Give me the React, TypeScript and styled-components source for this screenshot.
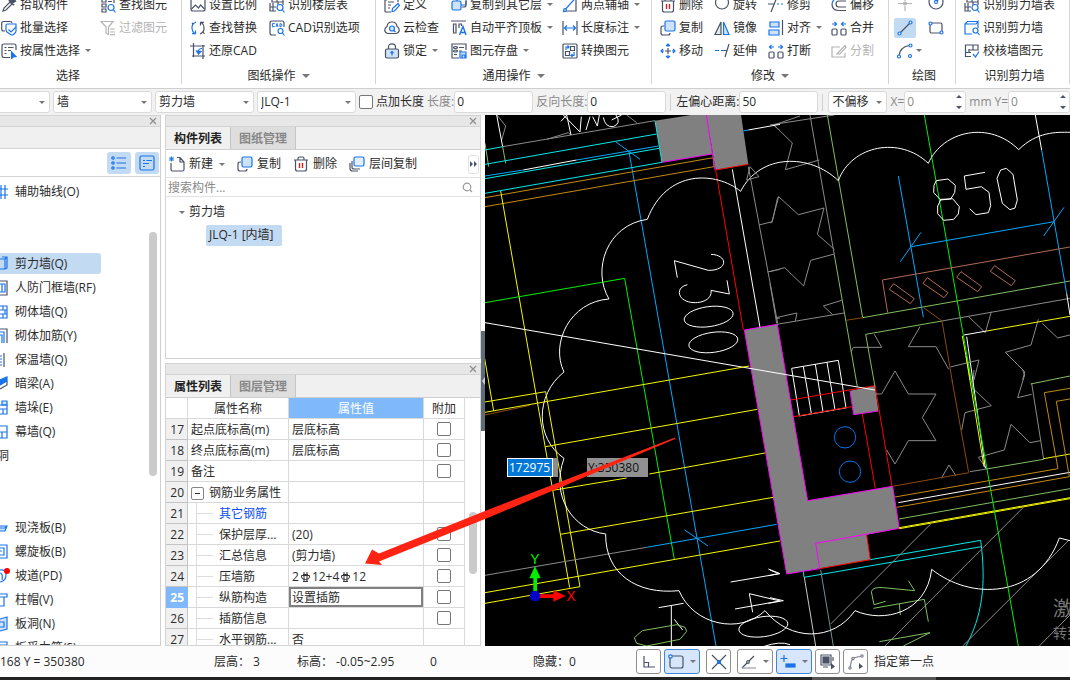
import React from "react";
import styled, { createGlobalStyle, css } from "styled-components";

const INK = "#4a5366";
const BLUE = "#1a73e8";
const PALE = "#cfe2fb";

const GlobalStyle = createGlobalStyle`
  *, *::before, *::after { box-sizing: border-box; }
  body { margin: 0; background: #fff; }
  body, button, input, select, table {
    font-family: "Open Sans", "Noto Sans CJK SC", sans-serif;
    font-size: 12px;
    line-height: 16px;
    color: #2b2b2b;
  }
  button, input, select { margin: 0; padding: 0; border: 0; background: none; }
`;

/* ---------- icons ---------- */

const Svg = styled.svg`
  display: block;
  flex: none;
  fill: none;
  stroke: ${INK};
  stroke-width: 1.2;
`;

const icons: Record<string, React.ReactNode> = {
  pick: (
    <>
      <path d="M2 14l1-3 6-6 2 2-6 6z" />
      <path d="M8 3l5 5M10 5l2-3 2 2-3 2z" fill={INK} strokeWidth="2" />
    </>
  ),
  batch: (
    <>
      <path d="M4 11H2.500Q.7 11 .7 9V3.500Q.7 1.500 2.700 1.500H9Q11 1.500 11 3" />
      <path d="M5 5.500Q5 4 6.500 4H15V11Q15 12 14 13L12.500 14.500Q11 15.500 9.500 14.500L6 12Q5 11 5 10z" stroke={BLUE} />
      <path d="M7.500 9.500l2.500 2.500 5-5" stroke={BLUE} />
    </>
  ),
  attrSelect: (
    <>
      <path d="M9 14.500H3Q1 14.500 1 12.500V3Q1 1 3 1H13Q15 1 15 3V7" />
      <path d="M3.500 4.500h2M7 4.500h5.500M3.500 7.500h2M7 7.500h3M3.500 10.500h2" />
      <path d="M10.500 9l4.500 4.500-2.500.3-2 1.700z" fill={BLUE} stroke={BLUE} />
    </>
  ),
  findElem: (
    <>
      <path d="M2 1h4v4H2zM2 7h4v3H2zM2 12h4v3H2zM8.500 1.500H14V6M8 4.500h4" />
      <circle cx="11" cy="10.500" r="3" stroke={BLUE} />
      <path d="M13.500 13l2 2.500" stroke={BLUE} />
    </>
  ),
  filter: (
    <g stroke="#b4b4b4">
      <path d="M1 1.500h12L8.500 7v7.500L6 13V7zM10 9h5M10 12h5M10 14.700h5" />
    </g>
  ),
  scale: (
    <>
      <path d="M3 1h10q2 0 2 2v9q0 2-2 2H3q-2 0-2-2V3q0-2 2-2z" />
      <path d="M1.500 12l4-4 3 3 2-3 4 4" />
    </>
  ),
  replace: (
    <>
      <path d="M6 2Q1.500 4 2 8.500 2.300 12 5 14M2 13.700h3.500V10.500" stroke={BLUE} />
      <path d="M10 14Q14.500 12 14 7.500 13.700 4 11 2M14 2.300h-3.500V5.500M3 3l-1 1M13 12l1.500 2" />
    </>
  ),
  restore: (
    <>
      <path d="M3.500 0v14M0 3h15M13 2v14M2 13h13" />
      <path d="M12 5.500Q8.500 5.500 8.500 8.500" stroke={BLUE} />
      <path d="M6.500 8l2 3 2.500-2.500z" fill={BLUE} stroke={BLUE} />
    </>
  ),
  floorTable: (
    <>
      <path d="M3 1h5v4H3zM8 1h6v4H8zM1 6v8h6M4 6v8M1 10h6M9 5v3M14 5v3" />
      <circle cx="11" cy="10.500" r="3" stroke={BLUE} />
      <path d="M13.500 13l2 2.500" stroke={BLUE} />
    </>
  ),
  cadOpts: (
    <>
      <path d="M7 15H3q-2 0-2-2V3q0-2 2-2h10q2 0 2 2v4" />
      <path d="M5.800 3.600H3.400v3.200h2.400M7 7l1-3.500L9 7M11 3.600v3.200q2 0 2-1.600t-2-1.600z" stroke={BLUE} strokeWidth="1" />
      <circle cx="11.500" cy="11" r="2.500" stroke={BLUE} />
      <path d="M13.500 13l2 2.500" stroke={BLUE} />
    </>
  ),
  define: (
    <>
      <path d="M7 15H2q-1 0-1-1V1h13v4M4 5h6M4 8h3M4 11h2M1 3h2" />
      <path d="M8 14.500l.5-3 5.500-5 1.500 2-5 5.500z" stroke={BLUE} />
    </>
  ),
  cloud: (
    <>
      <path d="M4 13.500Q.8 13 .8 10 .8 7.500 3 6.500 3.500 2 8 2t5 4.500q2.200 1 2.200 3.500 0 3-3.200 3.500z" />
      <circle cx="8" cy="8.500" r="2.500" stroke={BLUE} fill={PALE} />
      <path d="M10 10.500l1.500 1.500" stroke={BLUE} />
    </>
  ),
  lock: (
    <>
      <path d="M4.500 6V4Q4.500 .8 8 .8t3.500 3.200v2" />
      <rect x="1.500" y="6" width="13" height="9" rx="1.500" fill={PALE} />
      <path d="M8 12.500v-3M6.500 10L8 8.500 9.500 10" stroke={BLUE} />
    </>
  ),
  copyLayer: (
    <>
      <rect x="6" y="-1" width="9" height="9" rx="1.500" stroke={BLUE} />
      <rect x="1" y="4" width="9" height="9" rx="1.500" fill={PALE} stroke={BLUE} />
      <path d="M11 10h2q2 0 2-2V4" />
    </>
  ),
  alignTop: (
    <>
      <path d="M0 1h15M2.500 4h2.500v9H2.500zM8 8V4h2.500v2" />
      <path d="M8.500 15L12 6.500l3 8.500M9.500 12.500h4.500" stroke={BLUE} strokeWidth="1.400" />
    </>
  ),
  saveElem: (
    <>
      <path d="M8 15H1V1h14v6M8 4.500h5M8 8h3" />
      <ellipse cx="4.500" cy="4.500" rx="2" ry="1" />
      <ellipse cx="4.500" cy="8" rx="2" ry="1" />
      <path d="M9 9h6v6H9zM11 15v-3h3v3" stroke={BLUE} fill={PALE} />
      <path d="M3 11.500h3" />
    </>
  ),
  twoPoint: (
    <>
      <path d="M2 14h12V1" />
      <path d="M1 15L14.500 0" stroke={BLUE} />
      <circle cx="3" cy="13" r="1.300" stroke={BLUE} fill="#fff" />
    </>
  ),
  dimension: (
    <>
      <path d="M1 1v14M15 1v14" />
      <path d="M2.500 8h11M5 5.500L2.500 8 5 10.500M11 5.500L13.500 8 11 10.500" stroke={BLUE} />
    </>
  ),
  convert: (
    <>
      <rect x="1" y="1" width="14" height="14" rx="1" />
      <path d="M8.500 3.500h4v4h-4zM3.500 8.500h4v4h-4z" />
      <path d="M4 7V4h3M5.500 2.500L7 4 5.500 5.500M12 9v3.500H9M10.500 11L9 12.500 10.500 14" stroke={BLUE} />
    </>
  ),
  trash: (
    <>
      <path d="M2.500 4v9q0 2 2 2h7q2 0 2-2V4M1 4h14M5 4V2.500Q5 1 6.500 1h3Q11 1 11 2.500V4" />
      <path d="M6.500 7v5M9.500 7v5" stroke="#e02020" strokeWidth="1.400" />
    </>
  ),
  copy: (
    <>
      <path d="M4 6H3Q1 6 1 8v5q0 2 2 2h5q2 0 2-2" />
      <rect x="5" y="1" width="10" height="10" rx="1.500" fill={PALE} stroke={BLUE} />
    </>
  ),
  layerCopy: (
    <>
      <path d="M1 7v5.500Q1 15 3.500 15H9M3 5v6q0 2 2 2h6" />
      <rect x="5" y="1" width="10" height="9" rx="1.500" fill="#e3effd" stroke={BLUE} />
    </>
  ),
  move: (
    <>
      <path d="M8 5v6M5 8h6" />
      <path d="M8 4V1M6 3l2-2 2 2M8 12v3M6 13l2 2 2-2M4 8H1M3 6L1 8l2 2M12 8h3M13 6l2 2-2 2" stroke={BLUE} />
    </>
  ),
  rotate: <circle cx="8" cy="5.500" r="6.500" />,
  mirror: (
    <>
      <path d="M7 2v12.500H1z" fill="#e6e8eb" />
      <path d="M9.500 2v12.500H15z" fill={PALE} stroke={BLUE} />
    </>
  ),
  extend: (
    <>
      <path d="M1 7.500h9" stroke={BLUE} strokeDasharray="4 2" />
      <path d="M10 7.500h3M11 14L15 1" />
    </>
  ),
  trim: (
    <>
      <path d="M0 7h6M3 15L9 0" />
      <path d="M9 7h6" stroke={BLUE} strokeDasharray="2 2" />
    </>
  ),
  align: (
    <>
      <path d="M14.500 0v15" />
      <path d="M2 2h9v5H2zM1 10h10v5H1z" fill={PALE} stroke={BLUE} />
    </>
  ),
  breakIt: (
    <>
      <rect x="1" y="9" width="5" height="6" rx="1" />
      <rect x="10" y="9" width="5" height="6" rx="1" />
      <path d="M6 4H1.500M3.500 2l-2 2 2 2M10 4h4.500M12.500 2l2 2-2 2" stroke={BLUE} />
    </>
  ),
  merge: (
    <>
      <rect x="1" y="9" width="5" height="6" rx="1" />
      <rect x="10" y="9" width="5" height="6" rx="1" />
      <path d="M1 4h4.500M3.500 2l2 2-2 2M15 4h-4.500M12.500 2l-2 2 2 2" stroke={BLUE} />
    </>
  ),
  offset: (
    <>
      <path d="M15 1H8Q2 1 1 7" stroke={BLUE} />
      <path d="M15 13.500H7Q1 13 1 7M15 4H8Q5 4 5 7t3 3h7" />
    </>
  ),
  split: (
    <g stroke="#b4b4b4">
      <path d="M9 4H1v10h13v-4M6 11L14 2.500l1 2L9 11z" />
    </g>
  ),
  point: (
    <g stroke="#b4b4b4">
      <path d="M8-2v6M8 9v5M1 6.500h5M10 6.500h5" />
      <circle cx="8" cy="6.500" r="1.500" fill="#b4b4b4" />
    </g>
  ),
  line: (
    <>
      <path d="M3 13L13 3" />
      <circle cx="2.500" cy="13.500" r="1.500" stroke={BLUE} fill="#fff" />
      <circle cx="13.500" cy="2.500" r="1.500" stroke={BLUE} fill="#fff" />
    </>
  ),
  arc: (
    <>
      <path d="M2 13Q3 4 12 2.500" />
      <circle cx="2" cy="13.500" r="1.500" stroke={BLUE} fill="#fff" />
      <circle cx="13.500" cy="2.500" r="1.500" stroke={BLUE} fill="#fff" />
      <circle cx="13" cy="13" r="1.500" stroke={BLUE} fill="#fff" />
    </>
  ),
  circle: (
    <>
      <circle cx="8" cy="5" r="7" />
      <path d="M8 5l4-4" stroke={BLUE} />
      <circle cx="8" cy="5" r="1.500" stroke={BLUE} fill="#fff" />
    </>
  ),
  rect: (
    <>
      <rect x="2" y="3" width="12" height="10" rx="1.500" />
      <circle cx="2.500" cy="3.500" r="1.500" stroke={BLUE} fill="#fff" />
      <circle cx="13.500" cy="12.500" r="1.500" stroke={BLUE} fill="#fff" />
    </>
  ),
  findWall: (
    <>
      <path d="M8 14H1V4h11l2-2.500V8M1 4l2.500-2.500H14" stroke={BLUE} />
      <circle cx="11.500" cy="10.500" r="2.500" stroke={BLUE} />
      <path d="M13.500 12.500l2 2.500" stroke={BLUE} />
    </>
  ),
  checkWall: (
    <>
      <path d="M7 13.500H1.500V2H14v5H5M1.500 9.500H7M9 2v5M5 6v4" />
      <path d="M9 11l2.500 3L15 8.500" stroke={BLUE} />
    </>
  ),
  create: (
    <>
      <path d="M2 7v6.500q0 1.500 1.500 1.500h10q1.500 0 1.500-1.500V6l-4-4.500H8M11 1.500V6h4" />
      <path d="M.5 1l4 4M4.500 1l-4 4M2.500 .5v5M0 3h5" stroke={BLUE} strokeWidth="1" />
    </>
  ),
  list: (
    <g stroke={BLUE}>
      <circle cx="2" cy="3" r="1.200" />
      <circle cx="2" cy="8" r="1.200" />
      <circle cx="2" cy="13" r="1.200" />
      <path d="M5.500 3H15M5.500 8H15M5.500 13H15" />
    </g>
  ),
  detail: (
    <g stroke={BLUE}>
      <rect x="1" y="1" width="14" height="14" rx="1.500" />
      <path d="M4 5.500h2M7.500 5.500H13M4 8.500h6M4 11.500h2" />
    </g>
  ),
  ortho: <path d="M3 2v11h11M3 8.500h4.500V13" />,
  snapBox: (
    <>
      <rect x="2" y="2" width="13" height="12" rx="2" />
      <circle cx="2.500" cy="2.500" r="1.700" stroke={BLUE} fill="#fff" />
    </>
  ),
  cross: (
    <>
      <path d="M1 1l14 14M15 1L1 15" />
      <circle cx="8" cy="8" r="1.500" fill={BLUE} stroke={BLUE} />
    </>
  ),
  angle: (
    <>
      <path d="M1 14L13 2" />
      <path d="M1 14h14" stroke="#9aa0ab" />
      <circle cx="7" cy="8" r="1.300" fill="#fff" />
    </>
  ),
  addInput: (
    <>
      <path d="M4 1v7M.5 4.500h7" stroke={BLUE} />
      <rect x="6" y="10" width="9" height="3" fill={BLUE} stroke={BLUE} />
    </>
  ),
  copyRun: (
    <>
      <rect x="3" y="3" width="6" height="6" fill={INK} />
      <path d="M1 1h10v10H1zM13 3v4M3 13h5" />
      <path d="M11 9l4 3.500-4 3z" fill={INK} stroke="none" />
    </>
  ),
  curveRun: (
    <>
      <path d="M2 14Q3 7 5 4L14 2" stroke="#7d8490" />
      <g stroke="#7d8490" fill="#fff">
        <circle cx="5" cy="4.500" r="1.200" />
        <circle cx="14" cy="2" r="1.200" />
        <circle cx="2" cy="14" r="1.200" />
      </g>
      <path d="M11 9l4 3.500-4 2.500z" fill={INK} stroke="none" />
    </>
  ),
};

const Icon = ({ name }: { name: string }) => (
  <Svg width="16" height="16" viewBox="0 0 16 16" aria-hidden="true">
    {icons[name]}
  </Svg>
);

const Caret = ({ size = 6 }: { size?: number }) => (
  <Svg width={size} height={size / 2} viewBox="0 0 6 3" aria-hidden="true">
    <path d="M0 0h6L3 3z" fill="#777" stroke="none" />
  </Svg>
);

/* ---------- frame ---------- */

const Shell = styled.div`
  display: flex;
  flex-direction: column;
  height: 100vh;
  overflow: hidden;
`;

/* ---------- ribbon ---------- */

const Ribbon = styled.header`
  display: flex;
  flex: none;
  height: 89px;
  padding-bottom: 4px;
  overflow: hidden;
  border-bottom: 1px solid #cfcfcf;
`;

const Group = styled.section<{ $w?: number; $pad?: number }>`
  display: flex;
  flex-direction: column;
  justify-content: flex-end;
  flex: ${(p) => (p.$w ? `0 0 ${p.$w}px` : "1 0 114px")};
  padding-left: ${(p) => p.$pad ?? 8}px;
  border-right: 1px solid #d6d6d6;
  white-space: nowrap;
`;

const ToolGrid = styled.div<{ $cols: string }>`
  display: grid;
  grid-template-columns: ${(p) => p.$cols};
  grid-auto-rows: 23px;
  justify-items: start;
`;

const Tool = styled.button<{ $off?: boolean; $on?: boolean }>`
  display: flex;
  align-items: center;
  gap: 3px;
  height: 23px;
  white-space: nowrap;
  color: ${(p) => (p.$off ? "#b4b4b4" : "#2b2b2b")};
  ${(p) =>
    p.$on &&
    css`
      height: 20px;
      align-self: center;
      padding: 0 3px;
      margin-left: -3px;
      border-radius: 2px;
      background: #c3daf3;
    `}
`;

const GroupName = styled.h2<{ $end?: number }>`
  display: flex;
  align-items: center;
  justify-content: center;
  gap: 6px;
  height: 24px;
  margin: 0;
  padding: 6px ${(p) => p.$end ?? 8}px 0 0;
  font-size: 12px;
  font-weight: 400;
`;

type ToolDef = [icon: string, label: string, extra?: "menu" | "off"];

const CaretPad = styled.span`
  padding-left: 2px;
`;

const ToolCaret = () => (
  <CaretPad>
    <Caret />
  </CaretPad>
);

const ToolItem = ({ def }: { def: ToolDef }) => (
  <Tool type="button" $off={def[2] === "off"} disabled={def[2] === "off"}>
    <Icon name={def[0]} />
    <span>{def[1]}</span>
    {def[2] === "menu" && <ToolCaret />}
  </Tool>
);

const groups: {
  name: string;
  w?: number;
  pad?: number;
  end?: number;
  cols: string;
  menu?: boolean;
  tools: (ToolDef | null)[];
}[] = [
  {
    name: "选择", w: 182, pad: 1, end: 46, cols: "99px auto",
    tools: [["pick", "拾取构件"], ["findElem", "查找图元"], ["batch", "批量选择"], ["filter", "过滤图元", "off"], ["attrSelect", "按属性选择", "menu"], null],
  },
  {
    name: "图纸操作", w: 194, cols: "79px auto", menu: true,
    tools: [["scale", "设置比例"], ["floorTable", "识别楼层表"], ["replace", "查找替换"], ["cadOpts", "CAD识别选项"], ["restore", "还原CAD"], null],
  },
  {
    name: "通用操作", w: 276, cols: "67px 111px auto", menu: true,
    tools: [
      ["define", "定义"], ["copyLayer", "复制到其它层", "menu"], ["twoPoint", "两点辅轴", "menu"],
      ["cloud", "云检查"], ["alignTop", "自动平齐顶板", "menu"], ["dimension", "长度标注", "menu"],
      ["lock", "锁定", "menu"], ["saveElem", "图元存盘", "menu"], ["convert", "转换图元"],
    ],
  },
  {
    name: "修改", w: 237, cols: "54px 54px 63px auto", menu: true,
    tools: [
      ["trash", "删除"], ["rotate", "旋转"], ["trim", "修剪"], ["offset", "偏移"],
      ["copy", "复制"], ["mirror", "镜像"], ["align", "对齐", "menu"], ["merge", "合并"],
      ["move", "移动"], ["extend", "延伸"], ["breakIt", "打断"], ["split", "分割", "off"],
    ],
  },
];

/* ---------- option bar ---------- */

const OptionBar = styled.div`
  display: flex;
  flex: none;
  align-items: center;
  gap: 3px;
  height: 26px;
  overflow: hidden;
  background: #f2f2f2;
  white-space: nowrap;
`;

const boxed = css`
  height: 22px;
  border: 1px solid #dadada;
  border-radius: 3px;
  background: #fff;
`;

const ComboBox = styled.span<{ $w: number; $cut?: boolean }>`
  display: flex;
  flex: none;
  align-items: center;
  width: ${(p) => p.$w}px;
  padding-right: 4px;
  ${boxed}
  ${(p) => p.$cut && "border-left: 0; border-radius: 0 3px 3px 0;"}
  select {
    flex: 1;
    min-width: 0;
    padding-left: 3px;
    appearance: none;
    outline: 0;
  }
`;

const Combo = ({ w, value, label, cut }: { w: number; value: string; label: string; cut?: boolean }) => (
  <ComboBox $w={w} $cut={cut}>
    <select aria-label={label}>
      <option>{value}</option>
    </select>
    <Caret />
  </ComboBox>
);

const FieldLabel = styled.label<{ $dim?: boolean }>`
  display: flex;
  flex: none;
  align-items: center;
  color: ${(p) => (p.$dim ? "#8a8a8a" : "#2b2b2b")};
`;

const FieldBox = styled.span<{ $w: number }>`
  display: flex;
  align-items: center;
  width: ${(p) => p.$w}px;
  padding: 0 3px 0 2px;
  ${boxed}
  input {
    flex: 1;
    min-width: 0;
    outline: 0;
    &:disabled { color: #8a8a8a; }
  }
`;

const Spinner = () => (
  <Svg width="6" height="14" viewBox="0 0 6 14" aria-hidden="true">
    <path d="M0 3h6L3 0zM0 11h6l-3 3z" fill={INK} stroke="none" />
  </Svg>
);

const Field = ({ label, value, w = 79, dim, spin }: { label: string; value: string; w?: number; dim?: boolean; spin?: boolean }) => (
  <FieldLabel $dim={dim}>
    {label}
    <FieldBox $w={w}>
      <input defaultValue={value} disabled={spin} />
      {spin && <Spinner />}
    </FieldBox>
  </FieldLabel>
);

const Check = styled.input.attrs({ type: "checkbox" })`
  appearance: none;
  flex: none;
  width: 14px;
  height: 14px;
  border: 1px solid #777;
  border-radius: 2px;
  background: #fff;
`;

const CheckLabel = styled.label`
  display: flex;
  align-items: center;
  gap: 3px;
`;

const Rule = styled.i`
  flex: none;
  width: 1px;
  height: 17px;
  margin: 0 2px 0 1px;
  background: #cfcfcf;
`;

/* ---------- work area ---------- */

const Work = styled.main`
  position: relative;
  display: flex;
  flex: 1;
  min-height: 0;
`;

const PanelBar = styled.div`
  display: flex;
  flex: none;
  align-items: center;
  justify-content: flex-end;
  height: 12px;
  padding-right: 3px;
  border-top: 1px solid #d4d4d4;
  border-bottom: 1px solid #d4d4d4;
  background: #e7e7e7;
`;

const CloseButton = () => (
  <button type="button" aria-label="关闭">
    <Svg width="8" height="8" viewBox="0 0 8 8">
      <path d="M1 1l6 6M7 1L1 7" stroke="#8e8e8e" />
    </Svg>
  </button>
);

const Side = styled.aside`
  position: relative;
  display: flex;
  flex: 0 0 161px;
  flex-direction: column;
  overflow: hidden;
  border-right: 1px solid #cfcfcf;
  border-bottom: 1px solid #cfcfcf;
`;

const SideHead = styled.div`
  flex: none;
  height: 22px;
  background: #f0f0f0;
  border-bottom: 1px solid #d4d4d4;
`;

const SideTools = styled.div`
  display: flex;
  flex: none;
  align-items: center;
  justify-content: flex-end;
  gap: 4px;
  height: 28px;
  padding-right: 1px;
  border-bottom: 1px solid #d4d4d4;
`;

const Toggle = styled.button`
  display: flex;
  align-items: center;
  justify-content: center;
  width: 24px;
  height: 22px;
  border-radius: 3px;
  background: #c3daf3;
`;

const TreeList = styled.ul`
  flex: 1;
  min-height: 0;
  margin: 0;
  padding: 4px 0 0;
  overflow: hidden;
  list-style: none;
`;

const TreeRow = styled.li<{ $on?: boolean }>`
  display: flex;
  align-items: center;
  width: 101px;
  height: 21px;
  margin: 0 0 3px;
  padding-top: 1px;
  gap: 7px;
  border-radius: 0 3px 3px 0;
  white-space: nowrap;
  background: ${(p) => (p.$on ? "#c3daf3" : "transparent")};
`;

const GroupTail = styled.span`
  display: flex;
  justify-content: flex-end;
  width: 9px;
  overflow: hidden;
`;

const Thumb = styled.i<{ $top: number; $h: number; $right: number }>`
  position: absolute;
  top: ${(p) => p.$top}px;
  right: ${(p) => p.$right}px;
  width: 8px;
  height: ${(p) => p.$h}px;
  border-radius: 4px;
  background: #cbcbcb;
`;

/* The tree is scrolled sideways, so only the right half of each icon shows. */
const treeIcons: Record<string, React.ReactNode> = {
  axis: <path d="M1 1v14M5 1v14M0 5h8M0 11h8" />,
  wall: <path d="M0 3h5v10H0M2 1h5v11l-2 1M5 3l2-2" />,
  door: <><path d="M0 1h7v14H0" stroke={INK} /><path d="M0 4h5v8H0M2 4v8" /></>,
  brick: <path d="M0 2h7v12H0M0 6h7M0 10h7M3 2v4M3 10v4M5 6v4" />,
  rebar: <><path d="M0 1h7v14" stroke={INK} /><path d="M0 4h4v11M0 7h2v8" /></>,
  insul: <><path d="M4 1v14" stroke={INK} /><path d="M0 4h2M0 7h2M0 10h2M0 13h2" /></>,
  beam: <><path d="M0 4l7-3v4L0 9z" fill={BLUE} /><path d="M0 13l7-4V5" stroke={INK} /></>,
  stack: <><path d="M2 5V1h5v4z" fill={PALE} /><path d="M0 5h7v9H0M0 9h7M3 9v5" /></>,
  curtain: <path d="M0 2h7v12H0M0 8h7M2 8v6" />,
  slab: <path d="M0 6h7l-2 5H0M0 8h5l2-2" fill={PALE} />,
  spiral: <path d="M0 1h7v13H0M0 4h4v7H0M0 7h2" />,
  ramp: <path d="M0 2Q6 1 6 7 6 13 0 14M0 5q3 0 2 7" />,
  cap: <path d="M0 2h7v3H4v9H0M0 5h4" />,
  hole: <path d="M0 3l7-2v12l-7 2M0 6h4v5H0" fill={PALE} />,
  bar: <path d="M0 2h7v12H0M0 5h7" />,
};

const tree: { icon?: string; text?: string; on?: boolean; dot?: boolean }[] = [
  { icon: "axis", text: "辅助轴线(O)" }, {}, {},
  { icon: "wall", text: "剪力墙(Q)", on: true },
  { icon: "door", text: "人防门框墙(RF)" },
  { icon: "brick", text: "砌体墙(Q)" },
  { icon: "rebar", text: "砌体加筋(Y)" },
  { icon: "insul", text: "保温墙(Q)" },
  { icon: "beam", text: "暗梁(A)" },
  { icon: "stack", text: "墙垛(E)" },
  { icon: "curtain", text: "幕墙(Q)" },
  { text: "洞" }, {}, {},
  { icon: "slab", text: "现浇板(B)" },
  { icon: "spiral", text: "螺旋板(B)" },
  { icon: "ramp", text: "坡道(PD)", dot: true },
  { icon: "cap", text: "柱帽(V)" },
  { icon: "hole", text: "板洞(N)" },
  { icon: "bar", text: "板受力筋(S)" },
];

const TreeIcon = ({ name, dot }: { name: string; dot?: boolean }) => (
  <Svg width="10" height="16" viewBox="0 0 10 16" aria-hidden="true">
    <g stroke={BLUE}>{treeIcons[name]}</g>
    {dot && <circle cx="7" cy="3" r="3" fill="#f00" stroke="none" />}
  </Svg>
);

const TreeText = styled.span`
  margin-left: -2px;
`;

const Middle = styled.div`
  display: flex;
  flex: 0 0 316px;
  flex-direction: column;
  gap: 4px;
  margin-left: 4px;
`;

const Panel = styled.section<{ $grow?: boolean }>`
  position: relative;
  display: flex;
  flex-direction: column;
  flex: ${(p) => (p.$grow ? "1 1 0" : "0 0 244px")};
  min-height: 0;
  overflow: hidden;
  border: solid #d4d4d4;
  border-width: 0 1px 1px;
`;

const Tabs = styled.div`
  display: flex;
  flex: none;
  height: 23px;
  border-bottom: 1px solid #cfcfcf;
  background: #f0f0f0;
`;

const Tab = styled.button<{ $on?: boolean }>`
  width: 65px;
  padding-top: 1px;
  border-right: 1px solid #c4c4c4;
  background: ${(p) => (p.$on ? "#f0f0f0" : "#dedede")};
  color: ${(p) => (p.$on ? "#222" : "#888")};
  font-weight: 700;
`;

const Actions = styled.div`
  display: flex;
  flex: none;
  align-items: center;
  gap: 12px;
  height: 28px;
  padding: 1px 1px 0 3px;
  border-bottom: 1px solid #e2e2e2;
`;

const Action = styled.button`
  display: flex;
  align-items: center;
  gap: 4px;
  white-space: nowrap;
`;

const More = styled.button`
  display: flex;
  align-items: center;
  justify-content: center;
  width: 11px;
  height: 19px;
  margin-left: auto;
  border: 1px solid #e2e2e2;
  border-radius: 3px;
`;

const Search = styled.label`
  display: flex;
  flex: none;
  align-items: center;
  height: 19px;
  padding: 1px 7px 0 2px;
  border-bottom: 1px solid #e2e2e2;
  input {
    flex: 1;
    outline: 0;
    &::placeholder { color: #8a8a8a; opacity: 1; }
  }
`;

const Parts = styled.ul`
  margin: 0;
  padding: 4px 0 0 13px;
  list-style: none;
  ul { margin: 0; padding: 2px 0 0 27px; list-style: none; }
`;

const PartHead = styled.div`
  display: flex;
  align-items: center;
  gap: 4px;
  height: 22px;
`;

const Part = styled.span`
  display: inline-block;
  height: 21px;
  padding: 0 8px 0 3px;
  border-radius: 2px;
  background: #c3daf3;
  line-height: 20px;
`;

/* ---------- property table ---------- */

const Props = styled.table`
  width: 299px;
  table-layout: fixed;
  border-collapse: separate;
  border-spacing: 0;
  th, td {
    height: 21px;
    padding: 2px 3px 0;
    border-right: 1px solid #d9d9d9;
    border-bottom: 1px solid #d9d9d9;
    font-weight: 400;
    text-align: left;
    white-space: nowrap;
    overflow: hidden;
  }
  thead th { text-align: center; }
`;

const ActiveHead = styled.th`
  background: #80b9fb;
  color: #fff;
`;

const NumCell = styled.th<{ $on?: boolean }>`
  && {
    border-color: ${(p) => (p.$on ? "#80b9fb" : "#c4c4c4")};
    background: ${(p) => (p.$on ? "#80b9fb" : "#f0f0f0")};
    color: ${(p) => (p.$on ? "#fff" : "#2b2b2b")};
    font-weight: ${(p) => (p.$on ? 700 : 400)};
    text-align: right;
  }
`;

const ValueCell = styled.td<{ $on?: boolean }>`
  ${(p) => p.$on && "box-shadow: inset 0 0 0 2px #808080;"}
`;

const NameLine = styled.span<{ $link?: boolean }>`
  display: flex;
  align-items: center;
  gap: 6px;
  height: 16px;
  color: ${(p) => (p.$link ? "#0a50f0" : "inherit")};
`;

const Branch = styled.i`
  flex: none;
  width: 17px;
  height: 22px;
  margin-left: 5px;
  border-left: 1px solid #dcdcdc;
  &::after {
    content: "";
    display: block;
    height: 11px;
    border-bottom: 1px solid #dcdcdc;
  }
`;

const Fold = styled.button`
  display: flex;
  flex: none;
  align-items: center;
  justify-content: center;
  width: 13px;
  height: 13px;
  margin-right: -1px;
  border: 1px solid #888;
  border-radius: 2px;
`;

const CheckCell = styled.td`
  && {
    padding-top: 0;
    line-height: 0;
    text-align: center;
  }
`;

const RebarValue = styled.span`
  display: flex;
  align-items: center;
  gap: 2px;
`;

const Rebar = () => (
  <Svg width="9" height="11" viewBox="0 0 9 11" role="img" aria-label="HRB400">
    <path d="M.5 3.500V5Q.5 7.500 4.500 7.500T8.500 5V3.500M3 0v9.500M6 0v9.500M.5 3.500h8M2 9.500h5M2 2.500h5" strokeWidth="1" stroke="#333" />
  </Svg>
);

const rows: { n: number; name: string; value?: React.ReactNode; check?: boolean; kind?: "fold" | "child" | "link" }[] = [
  { n: 17, name: "起点底标高(m)", value: "层底标高", check: true },
  { n: 18, name: "终点底标高(m)", value: "层底标高", check: true },
  { n: 19, name: "备注", check: true },
  { n: 20, name: "钢筋业务属性", kind: "fold" },
  { n: 21, name: "其它钢筋", kind: "link" },
  { n: 22, name: "保护层厚...", value: "(20)", check: true, kind: "child" },
  { n: 23, name: "汇总信息", value: "(剪力墙)", check: true, kind: "child" },
  { n: 24, name: "压墙筋", value: <RebarValue>2<Rebar />12+4<Rebar />12</RebarValue>, check: true, kind: "child" },
  { n: 25, name: "纵筋构造", value: "设置插筋", check: true, kind: "child" },
  { n: 26, name: "插筋信息", check: true, kind: "child" },
  { n: 27, name: "水平钢筋...", value: "否", kind: "child" },
];

/* ---------- splitter and drawing ---------- */

const Splitter = styled.div`
  display: flex;
  flex: 0 0 4px;
  align-items: flex-start;
  padding-top: 216px;
`;

const Grip = styled.button`
  display: flex;
  align-items: center;
  width: 4px;
  height: 100px;
  background: #5f6b78;
`;

const Viewport = styled.div`
  position: relative;
  flex: 1;
  min-width: 0;
  overflow: hidden;
  background: #000;
`;

const Drawing = styled.svg`
  display: block;
  width: 100%;
  height: 100%;
  fill: none;
  path, circle, ellipse { vector-effect: non-scaling-stroke; stroke-width: 1; }
`;

const CoordX = styled.span`
  position: absolute;
  top: 343px;
  left: 22px;
  display: flex;
  width: 51px;
  background: #8c8c8c;
  input {
    width: 46px;
    height: 19px;
    padding-left: 1px;
    border: 1px solid #fff;
    background: #0078d7;
    color: #fff;
    outline: 0;
  }
`;

const CoordY = styled.output`
  position: absolute;
  top: 343px;
  left: 102px;
  width: 61px;
  height: 19px;
  padding-left: 1px;
  background: #919191;
  color: #111;
  line-height: 19px;
`;

const Watermark = styled.div`
  position: absolute;
  right: -13px;
  bottom: 3px;
  width: 30px;
  color: #777;
  font-size: 14px;
  line-height: 20px;
  white-space: nowrap;
  strong { display: block; font-size: 20px; font-weight: 400; line-height: 28px; }
`;

const Callout = styled.svg`
  position: absolute;
  top: 320px;
  left: 360px;
  pointer-events: none;
`;

const L = ({ c, d, f }: { c: string; d: string; f?: string }) => <path stroke={c} d={d} fill={f ?? "none"} />;

const CYAN = "#00eaea";
const SKY = "#00a8ff";
const MAG = "#ff00ff";
const RED = "#f00";
const YEL = "#f6f600";
const ORA = "#c48a10";
const GRN = "#00f000";
const LEAF = "#7fbf5f";
const GRY = "#8a8a8a";
const WHT = "#fff";
const BRN = "#b06a55";
const RUST = "#8a4a10";
const FILL = "#808080";

const Plan = () => (
  <Drawing role="img" aria-label="剪力墙平面图">
    <g transform="scale(0.33333)">
      {/* lower right: wall body first, so that outlines lie over it */}
      <g transform="translate(855 765)">
        <L c="none" f={FILL} d="M-77-120L22-137 113 392 368 349 388 475 290 494 301 569 50 612z" />
        <L c="none" f={FILL} d="M240 62L315 47 325 123 251 134z" />
        <L c={WHT} d="M65-5L88 138 231 113M65-5L205-29 228 113M100-11L124 131M136-17L159 125M171-23L195 119" />
        <L c={RED} d="M290 494L301 569 149 596M62 90L315 47 366 349M72 140L245 110M277 132L316 356" />
        <L c={MAG} d="M50 612L-77-120 22-137 113 392 368 349 388 475 137 520 149 596 50 612M240 62L251 134 325 123" />
        <circle cx="225" cy="202" r="32" stroke="#0074e8" />
        <circle cx="240" cy="305" r="32" stroke="#0074e8" />
        <L c={GRY} d="M318 72H335L375 3 415 72H498L457 143 498 212H415L375 282 350 240M514 325L537 285 558 318M612 0L608 55 664 107 585 128 575 180M758 0L764 15 743 83 785 73M785 40L821 268M600 305L650 297 625 262 703 240 723 163 780 218 812 212" />
        <L c={RUST} d="M546 30L596 308 368 349" />
        <L c={LEAF} d="M900 18L782 42M650 297L821 268M900 356L387 447" />
        <L c={YEL} d="M821 266L900 252M900 383L388 473M900 386L388 476M588-42L642 290" />
        <L c={WHT} d="M590-100L646 295M900 307L385 398" />
        <L c={ORA} d="M900 55L823 68 864 296 375 381M900 87L859 94 898 320 380 412" />
        <L c={CYAN} d="M301 569L632 511C650 650 635 740 588 828M100 605L102 622 634 530" />
        <L c="#c8c8c8" d="M103 622L137 828" />
        <L c="#6c9090" d="M152 600L190 828" />
        <L c={GRY} d="M482 462L182 762M760 412L345 828M895 512L578 828M900 735L808 828" />
        <L c={LEAF} d="M310 715L463 688 475 755M388 702L391 735M347 694L312 704 304 665Q308 650 340 653L434 662 415 632M328 815L480 788 400 828" />
        <L c={WHT} d="M-15 722C60 815 190 815 255 722C340 760 470 730 485 598C600 690 800 690 868 504L900 512" />
        <L c={WHT} d="M0 600L26 611-5 617M0 683L40 692-5 700M-20 830Q30 812 60 824" />
      </g>

      {/* upper right */}
      <g transform="translate(855 -15)">
        <L c={GRY} d="M120 15L193 435M0 45L193 15M12 45L90 18M12 45L67 99 46 179 148 150M0 338H5L26 260 85 314 162 294 142 373 193 418M193 432L122 451 101 528 44 473 0 485M215 571L160 588 188 614M20 643L222 609M18 623L81 609 76 633M0 520L20 640" />
        <L c={GRY} d="M243 725L250 712H335L313 673M450 650L415 710H498L536 778M541 771L627 750 612 810M596 620L646 668 664 605M516 633L900 565M900 675L863 684 817 640M805 628L783 705 706 727 764 785 758 810" />
        <L c={LEAF} d="M193 435L262 830M172 15L278 623 900 513M315 830L287 673 516 633" />
        <L c={RUST} d="M228 631L278 623M460 592L516 633 548 820" />
        <L c={YEL} d="M577 678L601 810M650 663L900 619" />
        <L c={WHT} d="M582 675L650 663" />
        <L c={GRN} d="M463 15L745 1608" />
        <L c={WHT} d="M796 15L815 120M890 550L900 615" />
        <L c={SKY} d="M815 120L890 550M385 198L460 622M424 410L852 335M391 455L453 367M821 378L882 292" />
        <L c={BRN} d="M353 608L337 510 900 411" />
        {[0, 1, 2, 3].map((i) => (
          <path key={i} stroke={BRN} transform={`translate(${i * 101} ${i * -18})`} d="M358 538L371 521 433 566 421 581z" />
        ))}
        <L c={WHT} d="M-88 244C-30 130 120 130 205 212C245 105 390 78 475 160C520 60 660 32 746 119C800 65 860 66 900 67" />
        <L c={WHT} d="M499 212L534 207 556 226 554 248 542 267 510 268 491 248 492 226zM512 270L548 266 568 290 565 312 551 328 521 331 503 311 503 288z" />
        <L c={WHT} d="M645 187L583 198 588 238 634 230 657 247 662 287 655 308 618 314 599 296M692 180L709 175 729 193 742 270 735 294 720 299 697 280 681 205z" />
      </g>

      {/* upper left */}
      <g transform="translate(-15 -15)">
        <L c="none" f={FILL} d="M525 32L678 8 697 132 546 157zM676 0L781 0 805 163 707 180z" />
        <L c={GRY} d="M68 110L525 32M51 15L77 48 65 90M200 88L265 68 272 75M440 15L470 38M805 170L893 640M837 345L877 335 893 262M862 486L900 478M888 626L900 624M810 170L837 200 800 210zM880 45L900 62" />
        <L c={WHT} d="M50 15L68 110M130 180L290 150M757 178L840 652M805 60L900 43" />
        <L c={WHT} d="M243 34L260 15 273 75M250 15L300 66 304 20M318 60L330 20M338 20L352 48 358 15M370 22Q375 52 400 50 425 40 408 15M425 15L395 30" />
        <L c={LEAF} d="M15 100L26 170M68 110L77 160" />
        <L c={CYAN} d="M15 120L68 110M15 163L530 72M15 206L537 115M15 250L546 157M525 32L546 157" />
        <L c={SKY} d="M15 198L130 180M290 150L535 108M408 96L480 148M447 125L708 1608M790 63L805 60" />
        <L c={ORA} d="M15 263L700 143M15 290L702 170M700 143L702 170" />
        <L c={MAG} d="M546 157L697 132M678 8L705 180" />
        <L c={RED} d="M707 180L805 163M707 180L790 660" />
        <L c={YEL} d="M62 243L269 1433M13 740L41 903" />
        <L c={GRN} d="M15 578L434 505 583 1348" />
        <L c={WHT} d="M15 638L1185 840" />
        <L c={WHT} d="M782 244C710 185 560 175 502 328C380 345 335 480 387 567C270 575 210 700 252 786C165 855 165 985 252 1045" />
        <L c={WHT} d="M592 503L583 452 685 481C745 482 745 435 693 433M741 511L748 552 693 541C700 588 600 590 598 548Q598 530 622 524" />
        <ellipse cx="686" cy="620" rx="74" ry="30" stroke={WHT} transform="rotate(-8 686 620)" />
        <ellipse cx="700" cy="697" rx="74" ry="30" stroke={WHT} transform="rotate(-8 700 697)" />
      </g>

      {/* lower left */}
      <g transform="translate(-15 765)">
        <L c={RUST} d="M15 135L150 106" />
        <L c={YEL} d="M15 96L197 65 300 650 15 700M15 127L808-12M197 230L832 118M218 361L440 324M508 312L855 249M241 493L880 382M15 668L900 513" />
        <L c={GRY} d="M15 616L500 532" />
        <L c={SKY} d="M500 532L890 463M614 480L684 528" />
        <L c={WHT} d="M252 265C210 380 280 480 377 492C375 610 470 675 597 662C640 765 780 795 855 722" />
        <L c={WHT} d="M536 713L611 700M574 708V828M583 748L608 780M752 636L900 611 865 597M765 717L900 693 808 671 818 727" />
        <L c={LEAF} d="M487 782L590 764 615 772 620 784 600 808 500 828 470 820 463 803z" />
        <ellipse cx="850" cy="770" rx="74" ry="30" stroke={WHT} transform="rotate(-8 850 770)" />
        <L c="none" f={GRN} d="M160 670V625H148L165 588 182 625H171V670z" />
        <L c="none" f={RED} d="M175 673H220V661L257 678 220 695V684H175z" />
        <circle cx="165" cy="678" r="16" fill="#0000c8" />
      </g>
    </g>
    <g fontFamily="Liberation Sans, sans-serif" fontSize="14" textAnchor="middle">
      <text x="50" y="449" fill={GRN}>Y</text>
      <text x="86" y="486" fill={RED}>X</text>
    </g>
  </Drawing>
);

/* ---------- status bar ---------- */

const Status = styled.footer`
  display: flex;
  flex: none;
  align-items: center;
  height: 31px;
  background: #fcfcfc;
  white-space: nowrap;
`;

const Readout = styled.span<{ $w: number }>`
  flex: none;
  width: ${(p) => p.$w}px;
`;

const Snaps = styled.div`
  display: flex;
  align-items: center;
  gap: 3px;
  margin-right: 6px;
`;

const Snap = styled.button<{ $on?: boolean; $wide?: boolean; $apart?: boolean }>`
  display: flex;
  align-items: center;
  justify-content: center;
  gap: 6px;
  width: ${(p) => (p.$wide ? 36 : 25)}px;
  height: 25px;
  margin-left: ${(p) => (p.$apart ? 3 : 0)}px;
  border: 1px solid ${(p) => (p.$on ? "#3b86e0" : "#8f8f8f")};
  border-radius: 3px;
  background: ${(p) => (p.$on ? "#d7e6fa" : "#fff")};
`;

const Taskbar = styled.div`
  display: flex;
  flex: none;
  height: 3px;
  padding-left: 812px;
  background: #222;
  &::before { content: ""; width: 124px; background: #555; }
`;

const snaps: { icon: string; label: string; on?: boolean; wide?: boolean; apart?: boolean }[] = [
  { icon: "ortho", label: "正交" },
  { icon: "snapBox", label: "对象捕捉", on: true, wide: true },
  { icon: "cross", label: "交点捕捉", apart: true },
  { icon: "angle", label: "极轴", wide: true, apart: true },
  { icon: "addInput", label: "动态输入", on: true, wide: true },
  { icon: "copyRun", label: "复制" },
  { icon: "curveRun", label: "折线" },
];

export default function App() {
  return (
    <Shell>
      <GlobalStyle />
      <Ribbon>
        {groups.map((g) => (
          <Group key={g.name} $w={g.w} $pad={g.pad}>
            <ToolGrid $cols={g.cols}>
              {g.tools.map((t, i) => (t ? <ToolItem key={i} def={t} /> : <span key={i} />))}
            </ToolGrid>
            <GroupName $end={g.end}>
              {g.name}
              {g.menu && <Caret size={8} />}
            </GroupName>
          </Group>
        ))}
        <Group $w={67}>
          <ToolGrid $cols="31px auto">
            <Tool type="button" aria-label="点"><Icon name="point" /></Tool>
            <Tool type="button" aria-label="圆"><Icon name="circle" /></Tool>
            <Tool type="button" aria-label="直线" $on><Icon name="line" /></Tool>
            <Tool type="button" aria-label="矩形"><Icon name="rect" /></Tool>
            <Tool type="button" aria-label="弧"><Icon name="arc" /><Caret /></Tool>
          </ToolGrid>
          <GroupName $end={4}>绘图</GroupName>
        </Group>
        <Group>
          <ToolGrid $cols="auto">
            <ToolItem def={["floorTable", "识别剪力墙表"]} />
            <ToolItem def={["findWall", "识别剪力墙"]} />
            <ToolItem def={["checkWall", "校核墙图元"]} />
          </ToolGrid>
          <GroupName $end={4}>识别剪力墙</GroupName>
        </Group>
      </Ribbon>

      <OptionBar>
        <Combo w={50} value="" label="楼层" cut />
        <Combo w={99} value="墙" label="构件类别" />
        <Combo w={99} value="剪力墙" label="构件类型" />
        <Combo w={99} value="JLQ-1" label="构件" />
        <CheckLabel><Check />点加长度</CheckLabel>
        <Field label="长度:" value="0" dim />
        <Field label="反向长度:" value="0" dim />
        <Rule />
        <Field label="左偏心距离:" value="50" />
        <Rule />
        <Combo w={59} value="不偏移" label="偏移方式" />
        <Field label="X=" value="0" w={62} dim spin />
        <FieldLabel as="span" $dim>mm</FieldLabel>
        <Field label="Y=" value="0" w={62} dim spin />
      </OptionBar>

      <Work>
        <Side>
          <PanelBar><CloseButton /></PanelBar>
          <SideHead />
          <SideTools>
            <Toggle type="button" aria-label="列表"><Icon name="list" /></Toggle>
            <Toggle type="button" aria-label="详情"><Icon name="detail" /></Toggle>
          </SideTools>
          <TreeList>
            {tree.map((t, i) => (
              <TreeRow key={i} $on={t.on}>
                {t.icon ? (
                  <>
                    <TreeIcon name={t.icon} dot={t.dot} />
                    <TreeText>{t.text}</TreeText>
                  </>
                ) : (
                  t.text && <GroupTail>{t.text}</GroupTail>
                )}
              </TreeRow>
            ))}
          </TreeList>
          <Thumb $top={117} $h={244} $right={3} />
        </Side>

        <Middle>
          <Panel>
            <PanelBar><CloseButton /></PanelBar>
            <Tabs>
              <Tab type="button" $on>构件列表</Tab>
              <Tab type="button">图纸管理</Tab>
            </Tabs>
            <Actions>
              <Action type="button"><Icon name="create" />新建<ToolCaret /></Action>
              <Action type="button"><Icon name="copy" />复制</Action>
              <Action type="button"><Icon name="trash" />删除</Action>
              <Action type="button"><Icon name="layerCopy" />层间复制</Action>
              <More type="button" aria-label="更多">
                <Svg width="7" height="6" viewBox="0 0 7 6">
                  <path d="M0 0l3 3-3 3zM4 0l3 3-3 3z" fill={INK} stroke="none" />
                </Svg>
              </More>
            </Actions>
            <Search>
              <input placeholder="搜索构件..." aria-label="搜索构件" />
              <Svg width="11" height="11" viewBox="0 0 11 11">
                <circle cx="5" cy="5" r="3.800" stroke="#999" />
                <path d="M8 8l2 2" stroke="#999" />
              </Svg>
            </Search>
            <Parts>
              <li>
                <PartHead><Caret />剪力墙</PartHead>
                <ul><li><Part>JLQ-1 [内墙]</Part></li></ul>
              </li>
            </Parts>
          </Panel>

          <Panel $grow>
            <PanelBar><CloseButton /></PanelBar>
            <Tabs>
              <Tab type="button" $on>属性列表</Tab>
              <Tab type="button">图层管理</Tab>
            </Tabs>
            <Props>
              <colgroup>
                <col width="22" />
                <col width="101" />
                <col width="135" />
                <col width="41" />
              </colgroup>
              <thead>
                <tr>
                  <th aria-label="序号" />
                  <th>属性名称</th>
                  <ActiveHead>属性值</ActiveHead>
                  <th>附加</th>
                </tr>
              </thead>
              <tbody>
                {rows.map((r) => (
                  <tr key={r.n}>
                    <NumCell $on={r.n === 25}>{r.n}</NumCell>
                    <td>
                      <NameLine $link={r.kind === "link"}>
                        {r.kind === "fold" && (
                          <Fold type="button" aria-label="折叠">
                            <Svg width="7" height="1" viewBox="0 0 7 1"><path d="M1 .5h5" stroke="#333" /></Svg>
                          </Fold>
                        )}
                        {(r.kind === "child" || r.kind === "link") && <Branch />}
                        {r.name}
                      </NameLine>
                    </td>
                    <ValueCell $on={r.n === 25}>{r.value}</ValueCell>
                    <CheckCell>{r.check && <Check aria-label={`附加 ${r.name}`} />}</CheckCell>
                  </tr>
                ))}
              </tbody>
            </Props>
            <Thumb $top={149} $h={62} $right={3} />
          </Panel>
        </Middle>

        <Splitter>
          <Grip type="button" aria-label="收起">
            <Svg width="4" height="8" viewBox="0 0 4 8"><path d="M4 0v8L1 4z" fill="#c8ced6" stroke="none" /></Svg>
          </Grip>
        </Splitter>

        <Viewport>
          <Plan />
          <CoordX><input defaultValue="172975" aria-label="X" /></CoordX>
          <CoordY>Y:350380</CoordY>
          <Watermark><strong>激</strong>转到</Watermark>
        </Viewport>

        <Callout width="320" height="134" viewBox="360 435 320 134" aria-hidden="true">
          <path fill="#ff2314" d="M675 437.500L490 509 379 553.500 372 549.500 365 563.500 382 565 379 561.500 490 517 675 439z" />
        </Callout>
      </Work>

      <Status>
        <Readout $w={214}>168 Y = 350380</Readout>
        <Readout $w={83}>层高： 3</Readout>
        <Readout $w={133}>标高： -0.05~2.95</Readout>
        <Readout $w={103}>0</Readout>
        <Readout $w={103}>隐藏：0</Readout>
        <Snaps>
          {snaps.map((s) => (
            <Snap key={s.label} type="button" aria-label={s.label} $on={s.on} $wide={s.wide} $apart={s.apart}>
              <Icon name={s.icon} />
              {s.wide && <Caret />}
            </Snap>
          ))}
        </Snaps>
        <span>指定第一点</span>
      </Status>
      <Taskbar />
    </Shell>
  );
}
